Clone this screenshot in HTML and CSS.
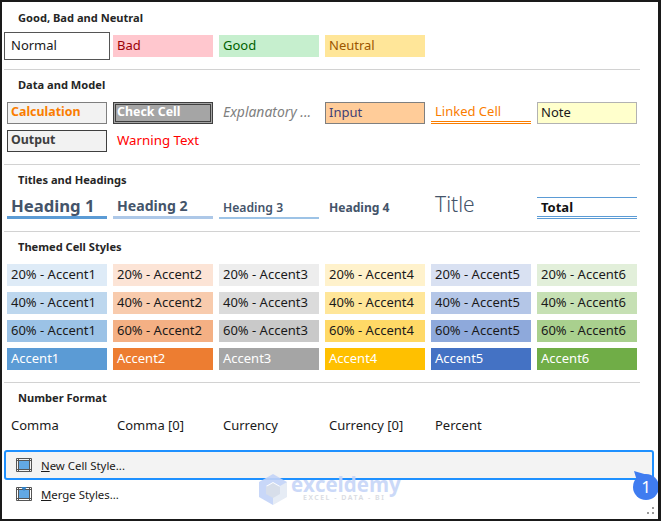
FILE: index.html
```html
<!DOCTYPE html>
<html>
<head>
  <meta charset="UTF-8">
  <title>Cell Styles</title>
  <link rel="stylesheet" href="styles.css">
</head>
<body>
  <div class="panel">

    <div class="section first">
      <div class="section-title">Good, Bad and Neutral</div>
      <div class="cell-grid">
        <div class="cell normal">Normal</div>
        <div class="cell bad">Bad</div>
        <div class="cell good">Good</div>
        <div class="cell neutral">Neutral</div>
      </div>
    </div>

    <div class="section">
      <div class="section-title">Data and Model</div>
      <div class="cell-grid">
        <div class="cell calculation">Calculation</div>
        <div class="cell check">Check Cell</div>
        <div class="cell explanatory">Explanatory ...</div>
        <div class="cell input">Input</div>
        <div class="cell linked">Linked Cell</div>
        <div class="cell note">Note</div>
        <div class="cell output">Output</div>
        <div class="cell warning">Warning Text</div>
      </div>
    </div>

    <div class="section">
      <div class="section-title">Titles and Headings</div>
      <div class="cell-grid">
        <div class="cell heading1">Heading 1</div>
        <div class="cell heading2">Heading 2</div>
        <div class="cell heading3">Heading 3</div>
        <div class="cell heading4">Heading 4</div>
        <div class="cell title">Title</div>
        <div class="cell total">Total</div>
      </div>
    </div>

    <div class="section">
      <div class="section-title">Themed Cell Styles</div>
      <div class="cell-grid">
        <div class="cell a1-20">20% - Accent1</div>
        <div class="cell a2-20">20% - Accent2</div>
        <div class="cell a3-20">20% - Accent3</div>
        <div class="cell a4-20">20% - Accent4</div>
        <div class="cell a5-20">20% - Accent5</div>
        <div class="cell a6-20">20% - Accent6</div>
        <div class="cell a1-40">40% - Accent1</div>
        <div class="cell a2-40">40% - Accent2</div>
        <div class="cell a3-40">40% - Accent3</div>
        <div class="cell a4-40">40% - Accent4</div>
        <div class="cell a5-40">40% - Accent5</div>
        <div class="cell a6-40">40% - Accent6</div>
        <div class="cell a1-60">60% - Accent1</div>
        <div class="cell a2-60">60% - Accent2</div>
        <div class="cell a3-60">60% - Accent3</div>
        <div class="cell a4-60">60% - Accent4</div>
        <div class="cell a5-60">60% - Accent5</div>
        <div class="cell a6-60">60% - Accent6</div>
        <div class="cell accent a1">Accent1</div>
        <div class="cell accent a2">Accent2</div>
        <div class="cell accent a3">Accent3</div>
        <div class="cell accent a4">Accent4</div>
        <div class="cell accent a5">Accent5</div>
        <div class="cell accent a6">Accent6</div>
      </div>
    </div>

    <div class="section last">
      <div class="section-title">Number Format</div>
      <div class="cell-grid">
        <div class="cell">Comma</div>
        <div class="cell">Comma [0]</div>
        <div class="cell">Currency</div>
        <div class="cell">Currency [0]</div>
        <div class="cell">Percent</div>
      </div>
    </div>

    <div class="menu">
      <div class="menu-item active">
        <svg class="menu-icon" width="16" height="14" viewBox="0 0 16 14">
          <rect x="3" y="3" width="10" height="8" fill="#62a8e4"/>
          <path d="M0.5 0.5H15.5V13.5H0.5ZM0.5 2.5H15.5M0.5 11.5H15.5M2.5 0.5V13.5M13.5 0.5V13.5" fill="none" stroke="#555" stroke-width="1"/>
        </svg>
        <span><u>N</u>ew Cell Style...</span>
      </div>
      <div class="menu-item">
        <svg class="menu-icon" width="16" height="14" viewBox="0 0 16 14">
          <rect x="3" y="3" width="10" height="8" fill="#62a8e4"/>
          <path d="M0.5 0.5H15.5V13.5H0.5ZM0.5 2.5H15.5M0.5 11.5H15.5M2.5 0.5V13.5M13.5 0.5V13.5" fill="none" stroke="#555" stroke-width="1"/>
          <path d="M5 0H11L8 4Z" fill="#2f7fc4"/>
        </svg>
        <span><u>M</u>erge Styles...</span>
      </div>
    </div>

    <!-- watermark sits over the menu -->
    <div class="watermark">
      <svg class="watermark-logo" width="28" height="31" viewBox="0 0 28 31">
        <path d="M14 0L28 8V16L14 8L0 16V8Z" fill="#c3d3f8"/>
        <path d="M0 8L14 16V31L0 23Z" fill="#c3d3f8"/>
        <path d="M28 8L14 16V31L28 23Z" fill="#e4eaf4"/>
        <path d="M14 9L21 13V20L14 24L7 20V13Z" fill="#d3dbe8"/>
      </svg>
      <div class="watermark-text">
        <div class="watermark-name">exceldemy</div>
        <div class="watermark-tag">EXCEL - DATA - BI</div>
      </div>
    </div>

    <div class="badge">1</div>

    <svg class="grip" width="7" height="7" viewBox="0 0 7 7">
      <rect x="5" y="0" width="2" height="2" fill="#9a9a9a"/>
      <rect x="0" y="5" width="2" height="2" fill="#9a9a9a"/>
      <rect x="5" y="5" width="2" height="2" fill="#9a9a9a"/>
    </svg>
  </div>
</body>
</html>
```

FILE: styles.css
```css
html, body {
  margin: 0;
  padding: 0;
  background-color: white;
}

.panel {
  position: relative;
  box-sizing: border-box;
  width: 661px;
  height: 521px;
  overflow: hidden;
  background-color: white;
  border-style: solid;
  border-color: #1a1a1a;
  border-width: 2px 3px 2px 2px;
  font-family: "Noto Sans", "Open Sans", sans-serif;
  font-size: 13px;
  color: #1a1a1a;
}

/* Sections, separated by a thin rule */
.section {
  width: 633px;
  margin-left: 2px;
  padding: 5px 0 12px 3px;
  border-bottom: 1px solid #d2d2d2;
}

.section.first {
  padding-top: 6px;
}

.section.last {
  border-bottom: none;
  padding-bottom: 13px;
}

.section-title {
  height: 20px;
  line-height: 20px;
  margin-bottom: 7px;
  padding-left: 11px;
  font-size: 11.1px;
  font-weight: 700;
  color: #262626;
}

.cell-grid {
  display: grid;
  grid-template-columns: repeat(6, 100px);
  grid-auto-rows: 22px;
  gap: 6px;
}

.cell {
  box-sizing: border-box;
  height: 22px;
  line-height: 20px;
  padding-left: 4px;
  white-space: nowrap;
  overflow: hidden;
}

/* Good, bad and neutral */
.normal {
  outline: 1px solid #555;
  outline-offset: 2px;
  overflow: visible;
}
.bad { background-color: #ffc7ce; color: #9c0006; }
.good { background-color: #c6efce; color: #006100; }
.neutral { background-color: #ffe699; color: #9c5700; }

/* Data and model */
.calculation, .check, .input, .note, .output {
  line-height: 18px;
  padding-left: 3px;
}
.calculation {
  background-color: #f2f2f2;
  border: 1px solid #7f7f7f;
  color: #fa7d00;
  font-size: 12.4px;
  font-weight: 700;
}
.check {
  background-color: #a5a5a5;
  border: 3px double #3f3f3f;
  color: white;
  font-size: 12.4px;
  font-weight: 700;
  line-height: 14px;
  padding-left: 1px;
}
.explanatory {
  color: #7f7f7f;
  font-size: 13.9px;
  font-style: italic;
}
.input {
  background-color: #ffcc99;
  border: 1px solid #7f7f7f;
  color: #3f3f76;
}
.linked {
  color: #fa7d00;
  border-bottom: 3px double #fa7d00;
  line-height: 19px;
}
.note {
  background-color: #ffffcc;
  border: 1px solid #b2b2b2;
  color: #1a1a1a;
}
.output {
  background-color: #f2f2f2;
  border: 1px solid #3f3f3f;
  color: #3f3f3f;
  font-size: 12.4px;
  font-weight: 700;
}
.warning {
  color: #ff0000;
  font-size: 13.3px;
}

/* Titles and headings */
.heading1, .heading2, .heading3, .heading4 {
  color: #44546a;
  font-weight: 700;
}
.heading1 {
  font-size: 16.7px;
  line-height: 18px;
  border-bottom: 3px solid #5b9bd5;
}
.heading2 {
  font-size: 14.1px;
  line-height: 18px;
  border-bottom: 3px solid #adc8e8;
}
.heading3 {
  font-size: 12.2px;
  font-weight: 600;
  line-height: 21px;
  border-bottom: 2px solid #9dc3e6;
}
.heading4 {
  font-size: 12.1px;
  line-height: 22px;
}
.title {
  font-size: 21px;
  font-weight: 300;
  line-height: 15px;
  color: #44546a;
  overflow: visible;
}
.total {
  font-weight: 700;
  color: #111;
  border-top: 1px solid #5b9bd5;
  border-bottom: 3px double #5b9bd5;
  line-height: 18px;
}

/* Themed cell styles */
.a1-20 { background-color: #deebf7; }
.a2-20 { background-color: #fce4d6; }
.a3-20 { background-color: #ededed; }
.a4-20 { background-color: #fff2cc; }
.a5-20 { background-color: #d9e1f2; }
.a6-20 { background-color: #e2efda; }
.a1-40 { background-color: #bdd7ee; }
.a2-40 { background-color: #f8cbad; }
.a3-40 { background-color: #dbdbdb; }
.a4-40 { background-color: #ffe699; }
.a5-40 { background-color: #b4c6e7; }
.a6-40 { background-color: #c6e0b4; }
.a1-60 { background-color: #9bc2e6; }
.a2-60 { background-color: #f4b084; }
.a3-60 { background-color: #c9c9c9; }
.a4-60 { background-color: #ffd966; }
.a5-60 { background-color: #8ea9db; }
.a6-60 { background-color: #a9d08e; }
.accent { color: white; }
.a1 { background-color: #5b9bd5; }
.a2 { background-color: #ed7d31; }
.a3 { background-color: #a5a5a5; }
.a4 { background-color: #ffc000; }
.a5 { background-color: #4472c4; }
.a6 { background-color: #70ad47; }

/* Menu at the bottom */
.menu {
  margin-left: 2px;
  width: 650px;
  font-size: 11.4px;
}

.menu-item {
  box-sizing: border-box;
  display: flex;
  align-items: center;
  height: 26px;
  padding-left: 12px;
  gap: 9px;
}

.menu-item.active {
  height: 30px;
  background-color: #f3f3f3;
  border: 2px solid #1e90ff;
  border-radius: 3px;
  padding-left: 10px;
  margin-bottom: 1px;
}

/* Overlays */
.watermark {
  position: absolute;
  left: 257px;
  top: 472px;
  display: flex;
  gap: 4px;
  opacity: 0.9;
}

.watermark-name {
  font-family: "Open Sans", sans-serif;
  font-size: 20.5px;
  font-weight: 700;
  line-height: 20px;
  color: #c6d5f8;
}

.watermark-tag {
  font-size: 7px;
  font-weight: 600;
  line-height: 8px;
  letter-spacing: 1.5px;
  color: #d5d8de;
  padding-left: 12px;
}

.badge {
  position: absolute;
  left: 631px;
  top: 472px;
  width: 26px;
  height: 26px;
  border-radius: 50%;
  background-color: #3f7cf0;
  color: white;
  font-size: 17px;
  line-height: 26px;
  text-align: center;
}

.badge::before {
  content: "";
  position: absolute;
  left: 1px;
  top: -3px;
  width: 12px;
  height: 12px;
  background-color: #3f7cf0;
  clip-path: polygon(0 0, 100% 30%, 30% 100%);
}

.grip {
  position: absolute;
  left: 645px;
  top: 505px;
}
```
